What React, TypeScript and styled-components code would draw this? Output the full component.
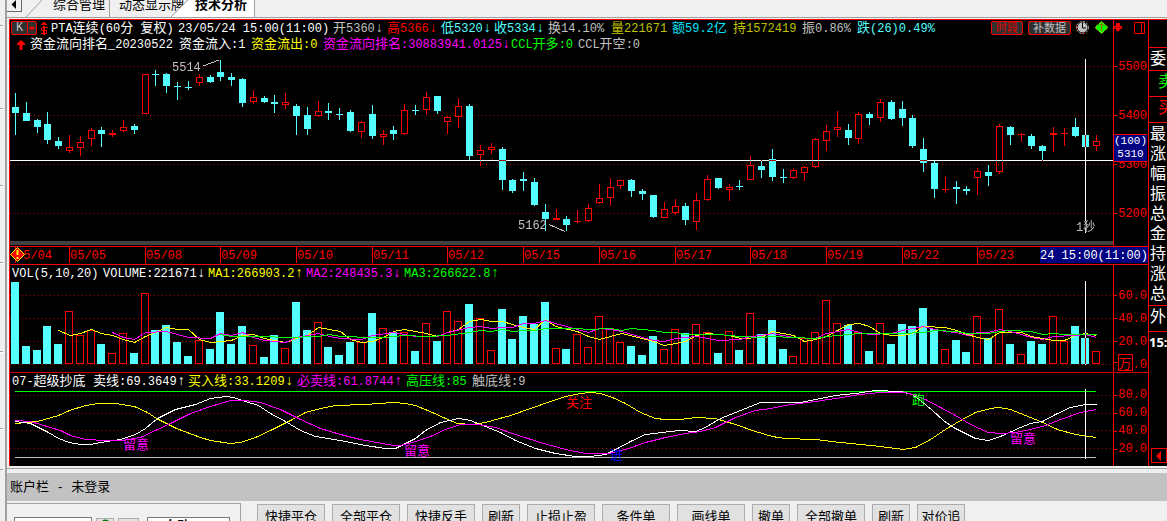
import React from "react";
import styled, { createGlobalStyle } from "styled-components";

const RED = "#ff0000";
const CYAN = "#54ffff";
const GRAY = "#c0c0c0";
const YELLOW = "#ffff00";
const MAGENTA = "#ff00ff";
const GREEN = "#00ff00";
const OLIVE = "#c0c000";
const WHITE = "#ffffff";

const PLOT_LEFT = 10;

const GlobalStyle = createGlobalStyle`
  * { box-sizing: border-box; }
  body {
    margin: 0;
    background: #f0f0f0;
    font-family: "Liberation Sans", "Noto Sans CJK SC", sans-serif;
    font-size: 13px;
    color: #000;
  }
  button, input, select { font: inherit; margin: 0; }
`;

const Shell = styled.div`
  display: flex;
  height: 100vh;
  overflow: hidden;
`;

const LeftRail = styled.div`
  flex: 0 0 7px;
  border-right: 2px solid #a0a0a0;
`;

const RailSection = styled.div<{ $height: number }>`
  width: 3px;
  height: ${(p) => p.$height}px;
  border-bottom: 1px solid #a0a0a0;
  & + & { border-top: 1px solid #fff; }
`;

const Main = styled.main`
  flex: 1;
  min-width: 0;
  display: flex;
  flex-direction: column;
`;

const TabBar = styled.nav`
  display: flex;
  align-items: flex-end;
  flex: 0 0 18px;
  border-bottom: 1px solid #a0a0a0;
  overflow: hidden;
`;

const TabScroll = styled.button`
  flex: 0 0 15px;
  height: 12px;
  margin-bottom: 5px;
  padding: 0 0 0 4px;
  display: flex;
  border: 1px solid #696969;
  border-top: 0;
  border-left: 0;
  background: #f0f0f0;
`;

const TabEdge = styled.svg<{ $overlap?: number }>`
  flex: 0 0 20px;
  height: 17px;
  margin-left: ${(p) => -(p.$overlap ?? 0)}px;
`;

const Tab = styled.button<{ $active?: boolean; $left: number; $right: number; $open?: boolean }>`
  height: 17px;
  padding: 0 ${(p) => p.$right}px 5px ${(p) => p.$left}px;
  border: 0;
  border-right: ${(p) => (p.$open ? "0" : "1px solid #a0a0a0")};
  background: ${(p) => (p.$active ? "#fff" : "transparent")};
  font-weight: ${(p) => (p.$active ? 700 : 400)};
  line-height: 14px;
  white-space: nowrap;
  display: flex;
  align-items: flex-end;
`;

const Terminal = styled.section`
  display: flex;
  flex: none;
  margin-top: 1px;
  margin-left: 2px;
  border-top: 1px solid ${RED};
  border-left: 1px solid ${RED};
  background: #000;
  color: #fff;
`;

const Charts = styled.div`
  flex: 1;
  min-width: 0;
`;

const Panel = styled.section<{ $line?: boolean }>`
  display: flex;
  border-top: ${(p) => (p.$line ? "1px solid #d00000" : "0")};
`;

const PlotColumn = styled.div`
  flex: 1;
  min-width: 0;
`;

const Plot = styled.svg`
  display: block;
  width: 100%;
  isolation: isolate;
  text {
    font-family: "Liberation Mono", "Noto Sans CJK SC", monospace;
    font-size: 12px;
  }
  text.mark { font-size: 13px; }
`;

const ScrollTrack = styled.div`
  height: 4px;
  margin-bottom: 1px;
  background: #404040;
`;

const HeaderLine = styled.div`
  display: flex;
  height: 16px;
`;

const Readouts = styled.div<{ $columns: string; $indent: number }>`
  flex: 1;
  display: grid;
  grid-template-columns: ${(p) => p.$columns};
  padding-left: ${(p) => p.$indent}px;
`;

const Readout = styled.span<{ $color: string }>`
  color: ${(p) => p.$color};
  font: 12px/18px "Liberation Mono", "Noto Sans CJK SC", monospace;
  white-space: pre;
`;

const Han = styled.span`
  font-size: 13px;
  line-height: 1px;
`;

const Arrow = styled.span`
  margin-left: 1px;
  font-family: "Liberation Sans", sans-serif;
  font-size: 14px;
  line-height: 1px;
`;

const PeriodPicker = styled.button`
  display: flex;
  align-items: center;
  width: 26px;
  height: 14px;
  margin: 1px 3px 0 1px;
  padding: 0;
  border: 1px solid ${RED};
  border-radius: 2px;
  background: #303030;
  color: ${GRAY};
  font: 12px/12px "Liberation Mono", monospace;
  span { flex: 1; }
  svg { border-left: 1px solid ${RED}; }
`;

const Tools = styled.div`
  display: flex;
  align-items: flex-start;
  gap: 5px;
  padding: 1px 4px 0 0;
`;

const ToolButton = styled.button<{ $color: string }>`
  height: 14px;
  padding: 0 4px;
  border: 1px solid ${RED};
  border-radius: 2px;
  background: #303030;
  color: ${(p) => p.$color};
  font-size: 11px;
  line-height: 12px;
  white-space: nowrap;
`;

const IconButton = styled.button`
  padding: 0;
  border: 0;
  background: none;
  display: flex;
`;

const Axis = styled.div<{ $top: number }>`
  position: relative;
  flex: 0 0 35px;
  padding-top: ${(p) => p.$top}px;
  border-left: 1px solid ${RED};
`;

const AxisTools = styled.div`
  display: flex;
  justify-content: space-between;
  height: 22px;
  padding: 2px 3px 0 0;
`;

const AxisLabel = styled.div<{ $step: number }>`
  display: flex;
  align-items: center;
  justify-content: space-between;
  height: ${(p) => p.$step}px;
  padding-right: 1px;
  color: ${RED};
  font: 12px/14px "Liberation Mono", monospace;
  &::before {
    content: "";
    width: 3px;
    height: 1px;
    background: ${RED};
  }
`;

const UnitBox = styled.b`
  display: inline-block;
  width: 15px;
  height: 17px;
  border: 1px solid ${RED};
  background: #000;
  font: 13px/15px "Noto Sans CJK SC", sans-serif;
  text-align: center;
`;

const CursorPrice = styled.div`
  position: absolute;
  top: 114px;
  left: 0;
  right: 1px;
  border-top: 1px solid ${RED};
  border-bottom: 1px solid ${RED};
  background: #000080;
  font: 11px/13px "Liberation Mono", monospace;
  text-align: center;
  white-space: nowrap;
`;

const DateRow = styled.div`
  position: relative;
  display: flex;
  height: 19px;
  padding-left: 5px;
  border-top: 1px solid ${RED};
  border-bottom: 1px solid ${RED};
  font: 12px/18px "Liberation Mono", monospace;
`;

const DateCell = styled.div<{ $width: number }>`
  flex: 0 0 ${(p) => p.$width}px;
  height: 16px;
  border-left: 1px solid ${RED};
  color: ${RED};
`;

const CursorDate = styled.div`
  flex: 1;
  height: 16px;
  background: #000080;
  white-space: nowrap;
`;

const Alert = styled.svg`
  position: absolute;
  left: 0;
  top: 0;
`;

const Side = styled.aside`
  flex: 0 0 19px;
  display: flex;
  flex-direction: column;
  border-left: 1px solid ${RED};
  overflow: hidden;
  font: 16px/19px "Noto Sans CJK SC", sans-serif;
`;

const SideCell = styled.div<{ $height: number; $color?: string; $indent?: number }>`
  height: ${(p) => p.$height}px;
  padding-left: ${(p) => p.$indent ?? 1}px;
  border-bottom: 1px solid ${RED};
  color: ${(p) => p.$color ?? WHITE};
  white-space: nowrap;
  div { height: 20px; }
`;

const SideTime = styled.div`
  font: bold 13px/20px "Noto Sans", sans-serif;
`;

const SideToggle = styled.button`
  width: 16px;
  height: 15px;
  margin: auto 0 3px 2px;
  padding: 0 0 0 3px;
  border: 1px solid ${RED};
  background: #000;
  display: flex;
  align-items: center;
`;

const Divider = styled.div`
  flex: 0 0 7px;
  border-top: 2px solid #f0f0f0;
  box-shadow: inset 0 1px #a0a0a0;
`;

const AccountBar = styled.header`
  flex: 0 0 27px;
  padding-left: 3px;
  background: #c2c2c2;
  font-size: 13px;
  line-height: 28px;
  white-space: pre;
  word-spacing: 0;
`;

const Dash = styled.span`
  margin: 0 9px;
`;

const TradeArea = styled.div`
  display: flex;
  align-items: flex-start;
  gap: 16px;
  padding-top: 2px;
`;

const Login = styled.form`
  flex: 0 0 234px;
  display: flex;
  gap: 4px;
  height: 60px;
  padding: 13px 0 0 7px;
  border: 1px solid #a0a0a0;
  border-left: 0;
`;

const Account = styled.input`
  width: 78px;
  height: 22px;
  border: 1px solid #7a7a7a;
  background: #fff;
`;

const MiniButton = styled.button<{ $width: number }>`
  width: ${(p) => p.$width}px;
  height: 22px;
  margin-top: 1px;
  padding: 0 0 0 4px;
  border: 1px solid #adadad;
  background: #e1e1e1;
  display: flex;
  align-items: flex-start;
`;

const Mode = styled.select`
  width: 83px;
  height: 18px;
  margin-left: 4px;
  padding: 0 0 0 16px;
  appearance: none;
  border: 1px solid #7a7a7a;
  border-radius: 0;
  background: #fff;
  color: #000;
  font-weight: 700;
  line-height: 16px;
`;

const Orders = styled.div`
  display: flex;
  gap: 7px;
  padding-top: 1px;
`;

const OrderButton = styled.button<{ $width: number }>`
  width: ${(p) => p.$width}px;
  height: 22px;
  padding: 0;
  border: 1px solid #adadad;
  background: #e1e1e1;
  white-space: nowrap;
`;

type Item = [text: string, color: string];

/* high, body top, body bottom, low, volume top; "r" is a rising bar */
const BARS: [number, number, number, number, number, "r" | "c"][] = [
  [93, 107, 113, 135, 282, "c"], [102, 113, 121, 121, 346, "c"], [119, 120, 127, 133, 350, "c"],
  [112, 124, 140, 144, 326, "c"], [137, 141, 146, 149, 344, "c"], [135, 147, 151, 153, 311, "r"],
  [136, 142, 148, 156, 335, "r"], [128, 130, 139, 146, 330, "r"], [127, 130, 134, 147, 344, "c"],
  [130, 133, 135, 137, 353, "r"], [120, 127, 131, 132, 333, "r"], [124, 126, 130, 134, 353, "c"],
  [74, 74, 114, 114, 293, "r"], [70, 74, 75, 86, 330, "c"], [73, 74, 86, 93, 325, "c"],
  [82, 86, 87, 100, 342, "c"], [81, 87, 88, 90, 356, "c"], [74, 77, 83, 86, 340, "r"],
  [75, 77, 82, 83, 349, "c"], [60, 72, 77, 81, 312, "c"], [73, 77, 80, 86, 344, "c"],
  [78, 79, 103, 107, 326, "c"], [90, 97, 102, 104, 345, "r"], [96, 98, 102, 103, 357, "c"],
  [95, 102, 104, 113, 335, "c"], [93, 102, 105, 109, 348, "r"], [104, 106, 116, 135, 302, "c"],
  [107, 115, 129, 135, 330, "c"], [101, 111, 116, 117, 322, "r"], [103, 111, 113, 120, 347, "c"],
  [108, 114, 115, 120, 355, "c"], [110, 112, 131, 132, 342, "c"], [121, 122, 132, 138, 342, "r"],
  [105, 114, 136, 139, 313, "c"], [130, 134, 137, 145, 328, "r"], [126, 130, 134, 140, 332, "c"],
  [104, 110, 134, 135, 332, "r"], [105, 110, 111, 115, 351, "c"], [92, 97, 110, 114, 323, "r"],
  [96, 96, 111, 114, 341, "c"], [116, 117, 122, 134, 311, "r"], [98, 106, 117, 128, 321, "r"],
  [104, 106, 156, 160, 304, "c"], [145, 150, 155, 166, 318, "r"], [143, 147, 150, 154, 350, "r"],
  [147, 149, 180, 190, 309, "c"], [179, 180, 191, 193, 339, "c"], [172, 179, 181, 191, 316, "c"],
  [178, 182, 205, 206, 324, "c"], [204, 212, 219, 231, 302, "c"], [209, 218, 220, 220, 348, "r"],
  [216, 219, 225, 231, 349, "c"], [210, 221, 222, 223, 334, "r"], [204, 208, 221, 222, 347, "r"],
  [184, 198, 203, 204, 316, "r"], [178, 187, 198, 206, 328, "r"], [180, 180, 186, 189, 342, "r"],
  [179, 180, 191, 197, 346, "c"], [189, 191, 194, 200, 355, "c"], [195, 195, 217, 218, 336, "c"],
  [202, 209, 218, 218, 349, "r"], [199, 206, 213, 215, 329, "r"], [203, 206, 220, 225, 333, "c"],
  [193, 200, 222, 230, 324, "r"], [175, 179, 200, 201, 332, "r"], [178, 178, 188, 189, 353, "c"],
  [184, 187, 190, 201, 331, "r"], [180, 186, 187, 190, 350, "c"], [156, 165, 180, 180, 313, "r"],
  [160, 166, 170, 178, 334, "c"], [149, 159, 177, 181, 320, "c"], [169, 177, 178, 183, 349, "c"],
  [168, 170, 178, 179, 356, "r"], [166, 167, 173, 181, 338, "r"], [138, 139, 167, 168, 332, "r"],
  [125, 131, 141, 151, 300, "r"], [111, 127, 130, 137, 323, "r"], [124, 130, 138, 145, 325, "c"],
  [112, 114, 139, 144, 332, "r"], [112, 114, 118, 125, 351, "c"], [99, 102, 118, 122, 323, "r"],
  [100, 102, 119, 120, 344, "c"], [101, 109, 118, 126, 324, "c"], [115, 118, 146, 148, 326, "c"],
  [138, 149, 163, 172, 308, "c"], [161, 163, 189, 198, 329, "c"], [177, 189, 190, 193, 349, "r"],
  [181, 187, 189, 204, 340, "c"], [186, 189, 191, 195, 352, "c"], [168, 171, 178, 195, 316, "r"],
  [165, 172, 176, 186, 338, "c"], [124, 126, 172, 174, 309, "r"], [126, 127, 135, 145, 344, "c"],
  [133, 134, 135, 142, 354, "r"], [134, 136, 146, 149, 341, "c"], [145, 146, 151, 161, 344, "c"],
  [127, 133, 135, 152, 316, "r"], [128, 133, 134, 146, 341, "r"], [118, 127, 136, 137, 326, "c"],
  [135, 135, 147, 147, 338, "c"], [135, 141, 146, 151, 351, "r"],
];

const barX = (i: number) => Math.floor(15.42 + 10.813 * i);

const MA1 = "58,330 70,335 80,333 91,329 101,333 112,335 123,339 134,342 145,336 155,332 166,327 177,329 188,329 199,339 210,342 231,340 242,335 253,334 264,338 285,342 296,338 307,335 318,327 340,331 350,339 361,342 372,341 383,337 393,331 404,329 426,333 437,336 447,332 458,329 469,321 481,319 491,321 502,321 512,324 523,327 534,329 545,319 555,326 577,331 588,336 599,339 610,336 621,333 642,338 653,341 664,345 675,343 685,341 696,335 707,333 729,335 740,338 761,337 772,331 793,335 804,341 815,339 826,336 837,330 848,324 859,323 869,326 880,333 891,335 902,335 912,333 923,326 945,327 956,330 967,334 977,337 988,339 999,332 1021,332 1031,336 1042,338 1053,340 1064,340 1075,335 1085,333 1096,335";
const MA2 = "112,332 123,337 134,339 145,332 166,331 177,334 188,337 210,338 220,333 231,335 242,332 253,337 264,340 285,342 296,337 318,333 329,336 340,338 361,339 372,335 393,332 404,334 415,336 437,336 447,332 469,327 480,326 491,328 502,327 512,327 523,323 534,323 545,320 555,323 577,329 588,332 599,328 610,329 621,331 642,337 653,340 664,341 675,338 696,336 707,338 718,340 740,339 750,336 761,335 772,333 793,337 815,338 826,333 848,329 859,332 869,334 891,333 902,330 923,326 934,329 945,331 956,332 967,335 977,332 988,332 999,329 1010,331 1021,334 1031,337 1042,339 1053,336 1075,335 1085,334 1096,337";
const MA3 = "220,334 231,336 253,336 296,337 307,336 318,336 329,334 340,336 372,337 383,337 404,335 426,336 447,335 469,332 480,330 491,331 502,329 512,331 523,330 534,330 545,328 577,328 588,329 610,328 621,330 631,328 653,330 664,332 675,332 685,334 718,334 740,336 761,337 772,336 815,338 826,336 848,334 859,333 901,333 923,332 934,330 956,331 967,333 988,333 999,331 1010,330 1031,331 1042,334 1053,333 1064,334 1096,334";

const BUY = "15,423 37,421 58,415 69,410 85,405 98,403 115,403 134,406 147,412 156,418 176,428 200,437 210,440 230,443 240,442 255,437 270,430 290,420 305,412 320,408 335,405 365,404 393,402 405,403 415,405 432,412 445,418 457,423 471,424 485,422 510,415 530,408 550,401 565,396 580,393 590,392 600,393 612,397 625,403 640,412 655,418 665,419 680,419 695,417 715,418 735,424 755,431 772,436 784,438 815,439 840,442 880,446 903,449 915,447 930,439 945,429 960,420 975,412 990,408 998,407 1010,409 1020,413 1040,421 1057,429 1075,434 1096,437";
const SELL = "15,421 30,423 48,432 58,438 69,442 80,444 90,444 100,442 120,439 135,434 145,428 157,418 175,409 195,404 210,398 225,396 233,397 245,401 258,405 270,413 285,421 300,430 315,436 340,440 365,445 385,448 395,448 405,443 415,438 425,430 440,422 458,418 470,420 485,426 500,432 515,440 535,448 555,453 575,456 590,456 605,454 617,448 630,441 645,434 670,431 680,430 695,431 705,427 720,418 740,410 760,402 772,402 800,402 820,398 835,395 855,393 875,390 900,391 912,394 920,400 932,410 943,420 953,427 963,432 975,438 988,440 1000,436 1020,427 1030,423 1042,421 1055,414 1070,407 1085,404 1096,404";
const MUST = "15,420 30,421 50,427 60,430 70,435 85,439 105,440 122,440 140,437 155,430 172,422 190,413 210,406 230,400 245,400 260,402 280,409 300,419 320,428 340,434 360,439 393,445 400,445 415,441 430,436 445,429 460,424 478,424 495,427 515,434 540,442 565,449 585,453 608,453 625,449 645,442 665,437 685,433 700,431 715,427 735,417 755,410 770,408 790,404 815,401 835,398 860,394 880,392 905,392 915,395 925,399 940,407 955,415 970,424 988,432 1000,433 1015,432 1030,429 1045,425 1060,419 1080,412 1096,409";

const QUOTE: Item[] = [
  ["PTA连续(60分 复权)", WHITE], ["23/05/24 15:00(11:00)", WHITE], ["开5360↓", GRAY],
  ["高5366↓", RED], ["低5320↓", CYAN], ["收5334↓", CYAN], ["换14.10%", GRAY],
  ["量221671", OLIVE], ["额59.2亿", "#00e5ff"], ["持1572419", OLIVE],
  ["振0.86%", GRAY], ["跌(26)0.49%", CYAN],
];
const FLOW: Item[] = [
  ["资金流向排名_20230522", WHITE], ["资金流入:1", WHITE], ["资金流出:0", YELLOW],
  ["资金流向排名:30883941.0125↓", MAGENTA], ["CCL开多:0", GREEN], ["CCL开空:0", GRAY],
];
const VOLUME: Item[] = [
  ["VOL(5,10,20)", WHITE], ["VOLUME:221671↓", WHITE], ["MA1:266903.2↑", YELLOW],
  ["MA2:248435.3↓", MAGENTA], ["MA3:266622.8↑", GREEN],
];
const SIGNAL: Item[] = [
  ["07-超级抄底", WHITE], ["卖线:69.3649↑", WHITE], ["买入线:33.1209↓", YELLOW],
  ["必卖线:61.8744↑", MAGENTA], ["高压线:85", GREEN], ["触底线:9", GRAY],
];

const DATES: [string, number][] = [
  ["05/04", 54], ["05/05", 76], ["05/08", 75], ["05/09", 76], ["05/10", 76], ["05/11", 75],
  ["05/12", 76], ["05/15", 76], ["05/16", 76], ["05/17", 75], ["05/18", 76], ["05/19", 76],
  ["05/22", 75], ["05/23", 63],
];

const ORDERS: [string, number][] = [
  ["快捷平仓", 68], ["全部平仓", 68], ["快捷反手", 68], ["刷新", 38], ["止损止盈", 68],
  ["条件单", 68], ["画线单", 68], ["撤单", 38], ["全部撤单", 68], ["刷新", 38], ["对价追", 48],
];

const RAIL = [26, 83, 77, 77, 89, 77, 41];

const Mixed = ({ text }: { text: string }) => (
  <>
    {text.split(/([\u4e00-\u9fff]+|[↑↓])/).map((part, i) => {
      if (i % 2 === 0) return part;
      return /[↑↓]/.test(part) ? <Arrow key={i}>{part}</Arrow> : <Han key={i}>{part}</Han>;
    })}
  </>
);

const ReadoutRow = ({ items, columns, indent = 0 }: { items: Item[]; columns: string; indent?: number }) => (
  <Readouts $columns={columns} $indent={indent}>
    {items.map(([text, color]) => (
      <Readout key={text} $color={color}><Mixed text={text} /></Readout>
    ))}
  </Readouts>
);

const Grid = ({ rows, top }: { rows: number[]; top: number }) => (
  <g stroke="#b00000" strokeDasharray="1 3" shapeRendering="crispEdges">
    {rows.map((y) => (
      <line key={y} x1="0" x2="100%" y1={y - top + 0.5} y2={y - top + 0.5} />
    ))}
  </g>
);

const Curve = ({ points, color }: { points: string; color: string }) => (
  <polyline points={points} fill="none" stroke={color} strokeWidth="1" shapeRendering="crispEdges" transform="translate(0.5 0.5)" />
);

const Candle = ({ i }: { i: number }) => {
  const [high, top, bottom, low, , kind] = BARS[i];
  const x = barX(i);
  const color = kind === "r" ? RED : CYAN;
  const hollow = kind === "r" && bottom - top > 2;
  return (
    <g fill={color}>
      <rect x={x} y={high} width="1" height={top - high} />
      <rect x={x} y={bottom} width="1" height={low - bottom} />
      {hollow ? (
        <rect x={x - 2.5} y={top + 0.5} width="6" height={bottom - top - 1} fill="none" stroke={color} />
      ) : (
        <rect x={x - 3} y={top} width="7" height={bottom - top} />
      )}
    </g>
  );
};

const VolumeBar = ({ i }: { i: number }) => {
  const top = BARS[i][4];
  const x = barX(i);
  return BARS[i][5] === "r" ? (
    <rect x={x - 3.5} y={top + 0.5} width="7" height={363 - top} fill="none" stroke={RED} />
  ) : (
    <rect x={x - 4} y={top} width="8" height={364 - top} fill={CYAN} />
  );
};

const PricePanel = () => (
  <Panel>
    <PlotColumn>
      <HeaderLine>
        <PeriodPicker aria-label="周期">
          <span>K</span>
          <svg width="9" height="12"><path d="M1 5h6L4 9z" fill={RED} /></svg>
        </PeriodPicker>
        <svg width="11" height="16" fill="none" stroke={RED} shapeRendering="crispEdges">
          <path d="M1 4.500h6M2 3.500h4M3 2.500h2M1.500 7.500h6M1.500 8v2M1.500 10.500h5M6.500 11v2M1 13.500h6M4 6v9" strokeWidth="1.500" />
        </svg>
        <ReadoutRow
          items={QUOTE}
          columns="127px 155px 54px 54px 53px 54px 63px 61px 61px 69px 55px 1fr"
        />
        <Tools>
          <ToolButton $color="#e00000">时段</ToolButton>
          <ToolButton $color={GRAY}>补数据</ToolButton>
          <IconButton aria-label="时钟">
            <svg width="13" height="13" viewBox="0 0 13 13">
              <circle cx="6.5" cy="6.5" r="6" fill="none" stroke={GRAY} strokeDasharray="2 1.500" />
              <circle cx="6.5" cy="6.5" r="5" fill={GRAY} />
              <path d="M6.500 2v5H10" fill="none" stroke="#000" />
              <path d="M.5 4v5M5 12.500h4" stroke={RED} strokeDasharray="1 2" />
            </svg>
          </IconButton>
          <IconButton aria-label="提示">
            <svg width="15" height="13" viewBox="0 0 15 13">
              <path d="M7.500.5 14 6.500 7.500 12.500 1 6.500z" fill={GREEN} stroke={YELLOW} strokeDasharray="1 1" />
              <path d="M5.500 4.500 7.500 2.500l2 2M7.500 3v7" fill="none" stroke="#a06000" />
            </svg>
          </IconButton>
        </Tools>
      </HeaderLine>
      <HeaderLine>
        <svg width="20" height="16"><path d="M11 4 15 7.500V9H12.500V14h-3V9H7V7.500z" fill={RED} /></svg>
        <ReadoutRow items={FLOW} columns="149px 72px 72px 188px 67px 1fr" />
      </HeaderLine>
      <Plot height="189" role="img" aria-label="K线图">
        <Grid rows={[66, 115, 164, 213]} top={52} />
        <g transform={`translate(${-PLOT_LEFT} -52)`} shapeRendering="crispEdges">
          {BARS.map((_, i) => <Candle key={i} i={i} />)}
          <path d="M203 66 219 60M549 224.500 565 231.500" stroke={GRAY} />
          <text x="172" y="71" fill={GRAY}>5514</text>
          <text x="518" y="229" fill={GRAY}>5162</text>
          <text x="1076" y="231" fill={GRAY}>1秒</text>
        </g>
        <g fill="#fff" style={{ mixBlendMode: "difference" }} shapeRendering="crispEdges">
          <rect x="0" y="108" width="100%" height="1" />
          <rect x="1075" y="7" width="1" height="174" />
        </g>
      </Plot>
      <ScrollTrack />
    </PlotColumn>
    <Axis $top={0}>
      <AxisTools>
        <IconButton aria-label="下移">
          <svg width="9" height="11"><path d="M2 1h4v3h2v3H6.500L4 10 1.500 7H0V4h2z" fill={RED} /><path d="M1.500 5.500h1M5.500 5.500h1" stroke="#000" /></svg>
        </IconButton>
        <IconButton aria-label="布局">
          <svg width="11" height="12" fill="none" stroke={RED}><path d="M.5.5h10v11H.5zM7.500.5v11" /></svg>
        </IconButton>
      </AxisTools>
      {["5500", "5400", "5300", "5200"].map((t) => <AxisLabel key={t} $step={49}>{t}</AxisLabel>)}
      <CursorPrice>(100)<br />5310</CursorPrice>
    </Axis>
  </Panel>
);

const VolumePanel = () => (
  <Panel>
    <PlotColumn>
      <HeaderLine>
        <ReadoutRow items={VOLUME} columns="91px 105px 98px 98px 1fr" indent={2} />
      </HeaderLine>
      <Plot height="91" role="img" aria-label="成交量">
        <Grid rows={[295, 318, 341, 364]} top={281} />
        <g transform={`translate(${-PLOT_LEFT} -281)`} shapeRendering="crispEdges">
          {BARS.map((_, i) => <VolumeBar key={i} i={i} />)}
          <Curve points={MA1} color={YELLOW} />
          <Curve points={MA2} color={MAGENTA} />
          <Curve points={MA3} color={GREEN} />
          <rect x="1085" y="281" width="1" height="84" fill="#fff" style={{ mixBlendMode: "difference" }} />
        </g>
      </Plot>
    </PlotColumn>
    <Axis $top={19}>
      {["60.0", "40.0", "20.0"].map((t) => <AxisLabel key={t} $step={23}>{t}</AxisLabel>)}
      <AxisLabel $step={19}><span><UnitBox>万</UnitBox>.0</span></AxisLabel>
    </Axis>
  </Panel>
);

const SignalPanel = () => (
  <Panel $line>
    <PlotColumn>
      <HeaderLine>
        <ReadoutRow items={SIGNAL} columns="81px 95px 109px 109px 66px 1fr" indent={2} />
      </HeaderLine>
      <Plot height="77" role="img" aria-label="超级抄底">
        <Grid rows={[395, 413, 430, 448]} top={389} />
        <g transform={`translate(${-PLOT_LEFT} -389)`}>
          <rect x="15" y="391" width="1081" height="1" fill={GREEN} />
          <rect x="15" y="457" width="1081" height="1" fill={GRAY} />
          <Curve points={BUY} color={YELLOW} />
          <Curve points={SELL} color={WHITE} />
          <Curve points={MUST} color={MAGENTA} />
          <text className="mark" x="123" y="449" fill={MAGENTA}>留意</text>
          <text className="mark" x="404" y="455" fill={MAGENTA}>留意</text>
          <text className="mark" x="566" y="407" fill={RED}>关注</text>
          <text className="mark" x="610" y="459" fill="#0000ff">进</text>
          <text className="mark" x="912" y="404" fill={GREEN}>跑</text>
          <text className="mark" x="1010" y="443" fill={MAGENTA}>留意</text>
          <rect x="1085" y="389" width="1" height="70" fill="#fff" />
        </g>
      </Plot>
    </PlotColumn>
    <Axis $top={13}>
      {["80.0", "60.0", "40.0", "20.0"].map((t) => <AxisLabel key={t} $step={18}>{t}</AxisLabel>)}
    </Axis>
  </Panel>
);

const SidePanel = () => (
  <Side>
    <SideCell $height={28} />
    <SideCell $height={23}>委</SideCell>
    <SideCell $height={26} $color={GREEN} $indent={9}>卖</SideCell>
    <SideCell $height={26} $color={RED} $indent={9}>买</SideCell>
    <SideCell $height={183}>
      {[..."最涨幅振总金持涨总"].map((c, i) => <div key={i}>{c}</div>)}
    </SideCell>
    <SideCell $height={26}>外</SideCell>
    <SideTime>15:</SideTime>
    <SideToggle aria-label="收起">
      <svg width="8" height="10"><path d="M6 0v10L1 5z" fill={RED} /></svg>
    </SideToggle>
  </Side>
);

export default function App() {
  return (
    <>
      <GlobalStyle />
      <Shell>
        <LeftRail>
          {RAIL.map((h, i) => <RailSection key={i} $height={h} />)}
        </LeftRail>
        <Main>
          <TabBar>
            <TabScroll aria-label="向左">
              <svg width="6" height="10"><path d="M5 0v9L.5 4.500z" fill="#000" /></svg>
            </TabScroll>
            <TabEdge><path d="M4 17 20 0" stroke="#a0a0a0" /></TabEdge>
            <Tab $left={11} $right={4}>综合管理</Tab>
            <Tab $left={9} $right={0} $open>动态显示牌</Tab>
            <TabEdge $overlap={13}>
              <path d="M0 17 17 0H20V17z" fill="#fff" />
              <path d="M0 17 17 0" stroke="#a0a0a0" />
            </TabEdge>
            <Tab $active $left={4} $right={7}>技术分析</Tab>
          </TabBar>
          <Terminal>
            <Charts>
              <PricePanel />
              <DateRow>
                {DATES.map(([d, w]) => <DateCell key={d} $width={w}>{d}</DateCell>)}
                <CursorDate>24 15:00(11:00)</CursorDate>
                <Alert width="16" height="16" viewBox="0 0 16 16">
                  <path d="M7.500.5 14.500 7.500 7.500 14.500.5 7.500z" fill={RED} stroke={YELLOW} />
                  <path d="M7.500 3v5M7.500 10v2" stroke={YELLOW} strokeWidth="2" />
                </Alert>
              </DateRow>
              <VolumePanel />
              <SignalPanel />
            </Charts>
            <SidePanel />
          </Terminal>
          <Divider />
          <AccountBar>账户栏<Dash>-</Dash>未登录</AccountBar>
          <TradeArea>
            <Login>
              <Account aria-label="账号" />
              <MiniButton $width={18} type="button" aria-label="刷新账号">
                <svg width="9" height="10" fill="none" stroke="#008000" strokeWidth="2"><path d="M1 5a3.500 3.500 0 0 1 7 0" /></svg>
              </MiniButton>
              <MiniButton $width={21} type="button" aria-label="更多" />
              <Mode aria-label="模式"><option>自动</option></Mode>
            </Login>
            <Orders>
              {ORDERS.map(([t, w], i) => <OrderButton key={i} $width={w}>{t}</OrderButton>)}
            </Orders>
          </TradeArea>
        </Main>
      </Shell>
    </>
  );
}
